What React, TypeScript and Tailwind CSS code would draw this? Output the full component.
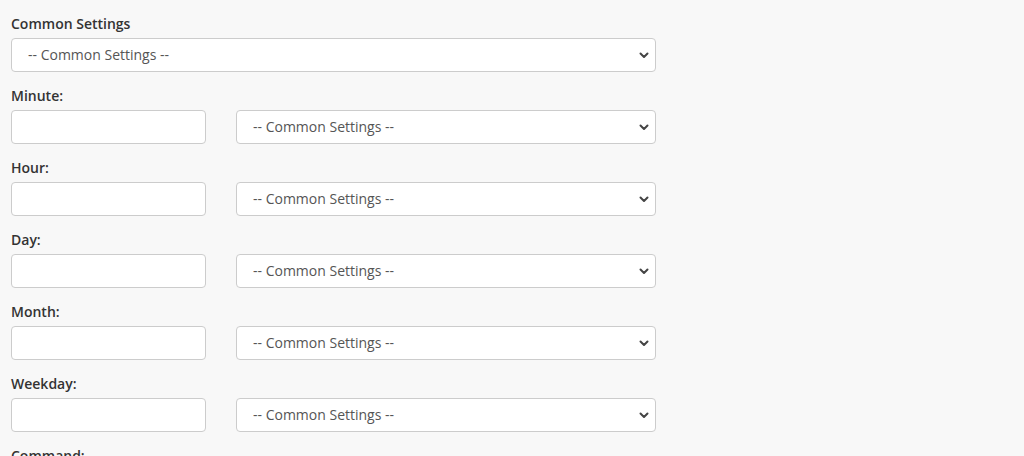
import React from 'react';

const fields = ['Minute:', 'Hour:', 'Day:', 'Month:', 'Weekday:'];

function Chevron() {
    return (
        <svg
            className="pointer-events-none absolute right-[6px] top-1/2 -translate-y-1/2"
            width="12"
            height="12"
            viewBox="0 0 12 12"
            fill="none"
        >
            <path d="M2.5 4.5 L6 8 L9.5 4.5" stroke="#444" strokeWidth="2" strokeLinecap="round" strokeLinejoin="round" />
        </svg>
    );
}

function CommonSelect({ className }: { className: string }) {
    return (
        <div className={`relative ${className}`}>
            <select className="h-[34px] w-full appearance-none rounded-[4px] border border-[#cccccc] bg-white pb-[2px] pl-[16px] pr-8 text-[14px] text-[#555555] outline-none">
                <option>-- Common Settings --</option>
            </select>
            <Chevron />
        </div>
    );
}

export default function App() {
    return (
        <div
            className="min-h-[456px] bg-[#f8f8f8] pl-[11px] pt-[14px] text-[#333333]"
            style={{ fontFamily: '"Open Sans", "Liberation Sans", sans-serif' }}
        >
            <div className="w-[645px]">
                <div className="mb-[14px]">
                    <label className="mb-[4px] block text-[14px] font-semibold leading-[20px]">Common Settings</label>
                    <CommonSelect className="w-[645px]" />
                </div>
                {fields.map(f => (
                    <div key={f} className="mb-[14px]">
                        <label className="mb-[4px] block text-[14px] font-semibold leading-[20px]">{f}</label>
                        <div className="flex gap-[30px]">
                            <input
                                type="text"
                                className="h-[34px] w-[195px] rounded-[4px] border border-[#cccccc] bg-white px-3 text-[14px] outline-none"
                            />
                            <CommonSelect className="w-[420px]" />
                        </div>
                    </div>
                ))}
                <div>
                    <label className="mb-[4px] block text-[14px] font-semibold leading-[20px]">Command:</label>
                </div>
            </div>
        </div>
    );
}
